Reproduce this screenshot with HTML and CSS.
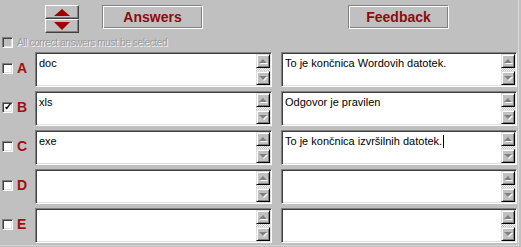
FILE: index.html
```html
<!DOCTYPE html>
<html lang="en">
<head>
  <meta charset="UTF-8">
  <title>Answers and Feedback</title>
  <link rel="stylesheet" href="styles.css">
</head>
<body>

<div class="panel">
  <div class="toolbar">
    <div class="updown">
      <div class="ud-btn ud-up"><span class="tri-up"></span></div>
      <div class="ud-btn ud-down"><span class="tri-down"></span></div>
    </div>
    <div class="head-btn answers-btn">Answers</div>
    <div class="head-btn feedback-btn">Feedback</div>
  </div>

  <div class="all-correct">
    <span class="check disabled"></span>
    <span class="all-correct-text">All correct answers must be selected</span>
  </div>

  <div class="rows">
    <!-- A -->
    <div class="label-cell"><span class="check"></span><span class="letter">A</span></div>
    <div class="field"><div class="field-text">doc</div><div class="scroll"><div class="sb-btn"><span class="sb-up"></span></div><div class="sb-track"></div><div class="sb-btn"><span class="sb-down"></span></div></div></div>
    <div class="field feedback"><div class="field-text">To je končnica Wordovih datotek.</div><div class="scroll"><div class="sb-btn"><span class="sb-up"></span></div><div class="sb-track"></div><div class="sb-btn"><span class="sb-down"></span></div></div></div>

    <!-- B -->
    <div class="label-cell"><span class="check checked">&#10003;</span><span class="letter">B</span></div>
    <div class="field"><div class="field-text">xls</div><div class="scroll"><div class="sb-btn"><span class="sb-up"></span></div><div class="sb-track"></div><div class="sb-btn"><span class="sb-down"></span></div></div></div>
    <div class="field feedback"><div class="field-text">Odgovor je pravilen</div><div class="scroll"><div class="sb-btn"><span class="sb-up"></span></div><div class="sb-track"></div><div class="sb-btn"><span class="sb-down"></span></div></div></div>

    <!-- C -->
    <div class="label-cell"><span class="check"></span><span class="letter">C</span></div>
    <div class="field"><div class="field-text">exe</div><div class="scroll"><div class="sb-btn"><span class="sb-up"></span></div><div class="sb-track"></div><div class="sb-btn"><span class="sb-down"></span></div></div></div>
    <div class="field feedback"><div class="field-text">To je končnica izvršilnih datotek.<span class="caret"></span></div><div class="scroll"><div class="sb-btn"><span class="sb-up"></span></div><div class="sb-track"></div><div class="sb-btn"><span class="sb-down"></span></div></div></div>

    <!-- D -->
    <div class="label-cell"><span class="check"></span><span class="letter">D</span></div>
    <div class="field"><div class="field-text"></div><div class="scroll"><div class="sb-btn"><span class="sb-up"></span></div><div class="sb-track"></div><div class="sb-btn"><span class="sb-down"></span></div></div></div>
    <div class="field feedback"><div class="field-text"></div><div class="scroll"><div class="sb-btn"><span class="sb-up"></span></div><div class="sb-track"></div><div class="sb-btn"><span class="sb-down"></span></div></div></div>

    <!-- E -->
    <div class="label-cell"><span class="check"></span><span class="letter">E</span></div>
    <div class="field"><div class="field-text"></div><div class="scroll"><div class="sb-btn"><span class="sb-up"></span></div><div class="sb-track"></div><div class="sb-btn"><span class="sb-down"></span></div></div></div>
    <div class="field feedback"><div class="field-text"></div><div class="scroll"><div class="sb-btn"><span class="sb-up"></span></div><div class="sb-track"></div><div class="sb-btn"><span class="sb-down"></span></div></div></div>
  </div>
</div>

</body>
</html>
```

FILE: styles.css
```css
body {
  margin: 0;
  background: #c0c0c0;
  font-family: "Liberation Sans", Arial, sans-serif;
}
.panel {
  width: 518px;
  height: 245px;
  border-right: 1px solid #dcdcdc;
  border-bottom: 1px solid #d4d4d4;
}

/* top bar */
.toolbar {
  display: flex;
  align-items: flex-start;
  padding-top: 5px;
  height: 27px;
}
.updown {
  margin-left: 45px;
  width: 34px;
  display: flex;
  flex-direction: column;
}
.ud-btn {
  height: 14px;
  display: flex;
  align-items: center;
  justify-content: center;
  box-sizing: border-box;
  border: 1px solid;
  border-color: #fff #404040 #404040 #fff;
  box-shadow: inset -1px -1px #808080;
}
.tri-up {
  width: 0;
  height: 0;
  border-left: 8px solid transparent;
  border-right: 8px solid transparent;
  border-bottom: 7px solid #a00000;
  margin-top: 1px;
}
.tri-down {
  width: 0;
  height: 0;
  border-left: 8px solid transparent;
  border-right: 8px solid transparent;
  border-top: 8px solid #a00000;
}
.head-btn {
  width: 101px;
  height: 24px;
  box-sizing: border-box;
  border: 1px solid;
  border-color: #808080 #fff #fff #808080;
  box-shadow: inset 1px 1px #fff, inset -1px -1px #808080;
  color: #8b0c0c;
  font-weight: bold;
  font-size: 14px;
  display: flex;
  align-items: center;
  justify-content: center;
}
.answers-btn {
  margin-left: 23px;
}
.feedback-btn {
  margin-left: 145px;
}

/* option line */
.all-correct {
  display: flex;
  align-items: center;
  height: 12px;
  margin-top: 4px;
  padding-left: 2px;
}
.all-correct-text {
  margin-left: 4px;
  font-size: 10px;
  letter-spacing: -0.35px;
  color: #9a9a9a;
  text-shadow: 1px 1px #f4f4f4;
}

.check {
  width: 11px;
  height: 11px;
  box-sizing: border-box;
  border: 1px solid;
  border-color: #808080 #fff #fff #808080;
  box-shadow: inset 1px 1px #404040, inset -1px -1px #dfdfdf;
  background: #fff;
  display: inline-flex;
  align-items: center;
  justify-content: center;
  font-size: 10px;
  font-weight: bold;
  line-height: 1;
  color: #000;
}
.check.disabled {
  background: #c0c0c0;
}

/* answer rows */
.rows {
  display: grid;
  grid-template-columns: 35px 237px 245px;
  grid-auto-rows: 35px;
  row-gap: 4px;
  margin-top: 4px;
}
.label-cell {
  display: flex;
  align-items: center;
  padding-left: 2px;
  padding-bottom: 3px;
}
.letter {
  margin-left: 4px;
  color: #a01010;
  font-weight: bold;
  font-size: 14px;
}
.field {
  display: flex;
  box-sizing: border-box;
  border: 1px solid;
  border-color: #808080 #fff #fff #808080;
  box-shadow: inset 1px 1px #404040, inset -1px -1px #dfdfdf;
  padding: 1px;
  background: #fff;
}
.field.feedback {
  margin-left: 9px;
}
.field-text {
  flex: 1;
  font-size: 11px;
  color: #000;
  padding: 3px 0 0 2px;
  white-space: nowrap;
  overflow: hidden;
}
.caret {
  display: inline-block;
  width: 1px;
  height: 13px;
  background: #000;
  vertical-align: -3px;
  margin-left: 1px;
}

/* disabled scrollbar */
.scroll {
  width: 14px;
  display: flex;
  flex-direction: column;
  background-color: #e0e0e0;
  background-image: repeating-conic-gradient(#fff 0 25%, #c0c0c0 0 50%);
  background-size: 2px 2px;
}
.sb-btn {
  height: 14px;
  box-sizing: border-box;
  background: #c0c0c0;
  border: 1px solid;
  border-color: #dfdfdf #000 #000 #dfdfdf;
  box-shadow: inset 1px 1px #fff, inset -1px -1px #808080;
  display: flex;
  align-items: center;
  justify-content: center;
}
.sb-track {
  flex: 1;
}
.sb-up {
  width: 0;
  height: 0;
  border-left: 4px solid transparent;
  border-right: 4px solid transparent;
  border-bottom: 4px solid #808080;
  filter: drop-shadow(1px 1px 0 #fff);
}
.sb-down {
  width: 0;
  height: 0;
  border-left: 4px solid transparent;
  border-right: 4px solid transparent;
  border-top: 4px solid #808080;
  filter: drop-shadow(1px 1px 0 #fff);
}
```
